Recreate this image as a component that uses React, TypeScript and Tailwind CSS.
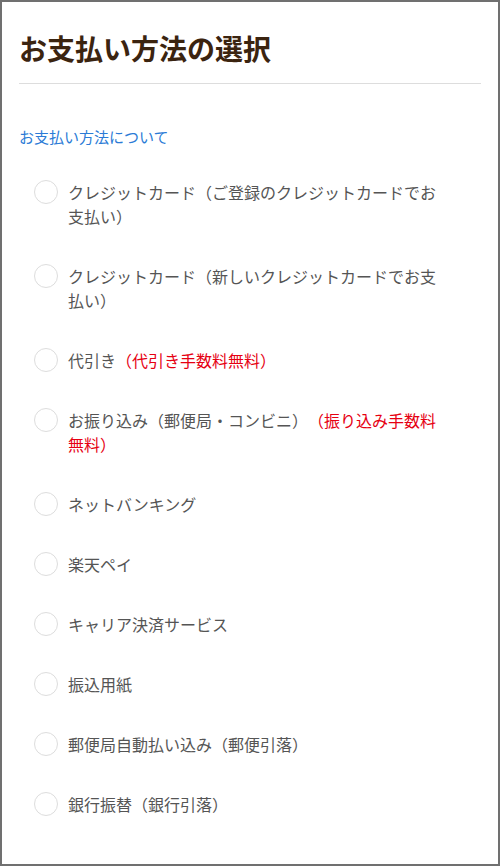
import React from "react";

const items: { label: string; note?: string }[] = [
  { label: "クレジットカード（ご登録のクレジットカードでお支払い）" },
  { label: "クレジットカード（新しいクレジットカードでお支払い）" },
  { label: "代引き", note: "（代引き手数料無料）" },
  { label: "お振り込み（郵便局・コンビニ）", note: "（振り込み手数料無料）" },
  { label: "ネットバンキング" },
  { label: "楽天ペイ" },
  { label: "キャリア決済サービス" },
  { label: "振込用紙" },
  { label: "郵便局自動払い込み（郵便引落）" },
  { label: "銀行振替（銀行引落）" },
];

export default function App() {
  return (
    <div
      className="w-[500px] h-[866px] border-2 border-[#707070] bg-white px-[17px] box-border overflow-hidden [text-spacing-trim:space-all]"
      style={{ fontFamily: '"Noto Sans CJK JP", "Noto Sans", sans-serif' }}
    >
      <div className="pt-[25px] pb-[14px] border-b border-[#dddddd]">
        <h1 className="text-[28px] leading-[42px] font-bold text-[#3b2410]">
          お支払い方法の選択
        </h1>
      </div>
      <div className="mt-[40px]">
        <a className="text-[15px] leading-[22px] text-[#2b7bd6]">お支払い方法について</a>
      </div>
      <ul className="mt-[14px]">
        {items.map((it, i) => (
          <li key={i} className="flex items-start gap-[10px] pl-[15px] py-[18px]">
            <span className="w-[24px] h-[24px] rounded-full border-[1.5px] border-[#dddddd] shrink-0 box-border" />
            <span className="w-[378px] text-[16px] leading-[24px] text-[#555555] [text-spacing-trim:space-all]">
              {it.label}
              {it.note && <span className="text-[#e60012]">{it.note}</span>}
            </span>
          </li>
        ))}
      </ul>
    </div>
  );
}
